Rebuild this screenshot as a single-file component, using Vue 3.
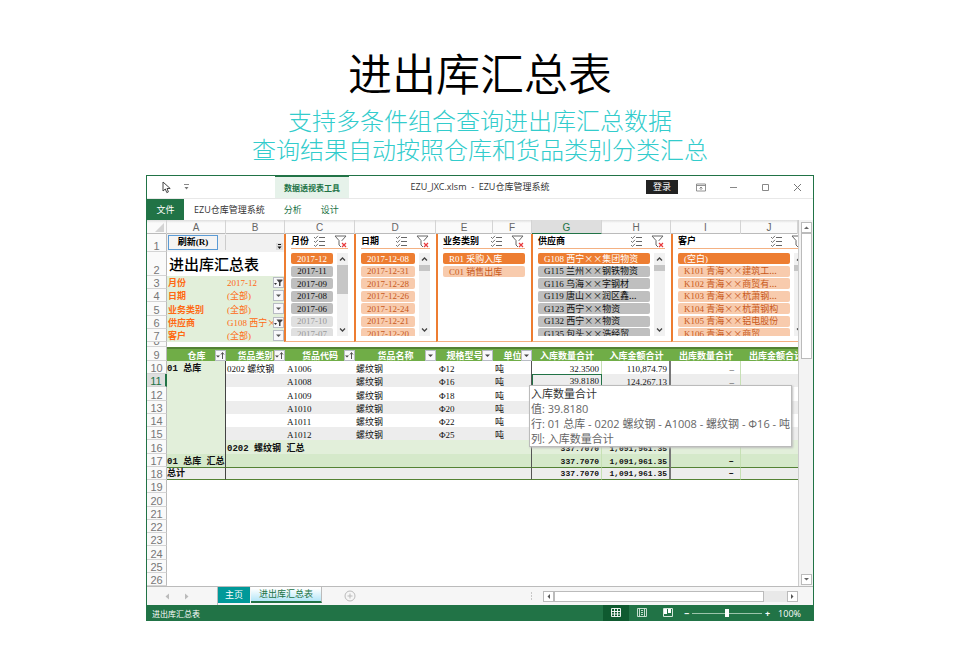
<script setup>
import { ref } from 'vue'

const columns = ['A', 'B', 'C', 'D', 'E', 'F', 'G', 'H', 'I', 'J']

const filters = [
  { id: 'f-month', label: '月份', value: '2017-12', active: true },
  { id: 'f-date', label: '日期', value: '(全部)', active: false },
  { id: 'f-kind', label: '业务类别', value: '(全部)', active: false },
  { id: 'f-supplier', label: '供应商', value: 'G108 西宁×', active: true },
  { id: 'f-client', label: '客户', value: '(全部)', active: false },
]

const slicers = [
  {
    title: '月份', area: 'month', scroll: 'mid', center: true,
    items: [
      ['2017-12', 'on'], ['2017-11', 'grey'], ['2017-09', 'grey'], ['2017-08', 'grey'],
      ['2017-06', 'grey'], ['2017-10', 'faint'], ['2017-07', 'faint'],
    ],
  },
  {
    title: '日期', area: 'date', scroll: 'short', center: false,
    items: [
      ['2017-12-08', 'on'], ['2017-12-31', 'soft'], ['2017-12-28', 'soft'], ['2017-12-26', 'soft'],
      ['2017-12-24', 'soft'], ['2017-12-21', 'soft'], ['2017-12-20', 'soft'],
    ],
  },
  {
    title: '业务类别', area: 'kind', scroll: '', center: false,
    items: [['R01 采购入库', 'on'], ['C01 销售出库', 'soft']],
  },
  {
    title: '供应商', area: 'supplier', scroll: 'short', center: false,
    items: [
      ['G108 西宁××集团物资', 'on'], ['G115 兰州××钢铁物资', 'grey'], ['G116 乌海××字钢材', 'grey'],
      ['G119 唐山××润区鑫...', 'grey'], ['G123 西宁××物资', 'grey'], ['G132 西宁××物资', 'grey'],
      ['G135 包头××浩经贸', 'grey'],
    ],
  },
  {
    title: '客户', area: 'client', scroll: 'short', center: false,
    items: [
      ['(空白)', 'on'], ['K101 青海××建筑工...', 'soft'], ['K102 青海××商贸有...', 'soft'],
      ['K103 青海××杭萧钢...', 'soft'], ['K104 青海××杭萧钢构', 'soft'], ['K105 青海××铝电股份', 'soft'],
      ['K106 青海××商贸', 'soft'],
    ],
  },
]

// Splits a label at its first space: the code, then the name set in the CJK face.
function parts(text) {
  const at = text.indexOf(' ')
  return at < 0 ? [text, ''] : [text.slice(0, at + 1), text.slice(at + 1)]
}

const heads = [
  { text: '仓库', btn: 'sort' }, { text: '货品类别', btn: 'sort' }, { text: '货品代码', btn: 'sort' },
  { text: '货品名称', btn: 'drop' }, { text: '规格型号', btn: 'drop' }, { text: '单位', btn: 'drop' },
  { text: '入库数量合计' }, { text: '入库金额合计' }, { text: '出库数量合计' }, { text: '出库金额合计' },
]

const rows = [
  { n: 10, kind: 'plain', cells: ['01 总库', '0202 螺纹钢', 'A1006', '螺纹钢', 'Φ12', '吨', '32.3500', '110,874.79', '–', ''] },
  { n: 11, kind: 'band', cells: ['', '', 'A1008', '螺纹钢', 'Φ16', '吨', '39.8180', '124,267.13', '–', ''] },
  { n: 12, kind: 'plain', cells: ['', '', 'A1009', '螺纹钢', 'Φ18', '吨', '', '', '', ''] },
  { n: 13, kind: 'band', cells: ['', '', 'A1010', '螺纹钢', 'Φ20', '吨', '', '', '', ''] },
  { n: 14, kind: 'plain', cells: ['', '', 'A1011', '螺纹钢', 'Φ22', '吨', '', '', '', ''] },
  { n: 15, kind: 'band', cells: ['', '', 'A1012', '螺纹钢', 'Φ25', '吨', '', '', '', ''] },
  { n: 16, kind: 'sub', cells: ['', '0202 螺纹钢 汇总', '', '', '', '', '337.7070', '1,091,961.35', '', ''] },
  { n: 17, kind: 'sum', cells: ['01 总库 汇总', '', '', '', '', '', '337.7070', '1,091,961.35', '–', ''] },
  { n: 18, kind: 'total', cells: ['总计', '', '', '', '', '', '337.7070', '1,091,961.35', '–', ''] },
]
const blankRows = [19, 20, 21, 22, 23, 24, 25, 26]

const zoom = ref(50)
</script>

<template>
  <main class="page">
    <h1>进出库汇总表</h1>
    <p class="lead">支持多条件组合查询进出库汇总数据<br>查询结果自动按照仓库和货品类别分类汇总</p>

    <section class="window">
      <header class="titlebar">
        <div class="quick">
          <svg class="pointer" width="10" height="13" viewBox="0 0 10 13"><path d="M1 1v9l2.300-2 1.500 3.600 1.600-.7L5 7.500h3.200z" fill="#fff" stroke="#444" stroke-width="1" /></svg>
          <svg class="more" width="5" height="6" viewBox="0 0 5 6"><path d="M0 .5h5" stroke="#888" /><path d="M.5 3h4L2.500 5.500z" fill="#777" /></svg>
          <span class="context">数据透视表工具</span>
        </div>
        <div class="doc">EZU_JXC.xlsm&nbsp; -&nbsp; EZU仓库管理系统</div>
        <div class="controls">
          <button class="login">登录</button>
          <button class="ctl" aria-label="功能区显示选项"><svg width="12" height="9" viewBox="0 0 12 9" fill="none" stroke="#777"><path d="M1.500 1h9v7h-9zM1.500 2.500h9M6 7V4M4.500 5.500L6 4l1.500 1.500" stroke-width=".8" /></svg></button>
          <button class="ctl" aria-label="最小化"><svg width="9" height="9" viewBox="0 0 9 9"><path d="M1 4.500h7" stroke="#888" /></svg></button>
          <button class="ctl" aria-label="最大化"><svg width="9" height="9" viewBox="0 0 9 9"><path d="M1.500 1.500h6v6h-6z" fill="none" stroke="#888" /></svg></button>
          <button class="ctl" aria-label="关闭"><svg width="9" height="9" viewBox="0 0 9 9"><path d="M1 1l7 7M8 1L1 8" stroke="#777" /></svg></button>
        </div>
      </header>

      <nav class="ribbon">
        <button class="file">文件</button>
        <button class="tab dark">EZU仓库管理系统</button>
        <button class="tab">分析</button>
        <button class="tab">设计</button>
      </nav>

      <div class="sheet">
        <div class="grid-area">
          <div class="colheads">
            <span class="corner"><svg width="9" height="9" viewBox="0 0 9 9"><path d="M9 0v9H0z" fill="#d4d4d4" /></svg></span>
            <span v-for="c in columns" :key="c" class="colhead" :class="{ picked: c === 'G' }">{{ c }}</span>
          </div>

          <div class="upper">
            <div class="rownums">
              <span v-for="n in 8" :key="n" class="rownum">{{ n }}</span>
            </div>
            <div class="left">
              <div class="toolrow">
                <button class="refresh">刷新(R)</button>
                <span class="well"><svg width="7" height="7" viewBox="0 0 7 7"><path d="M0 0h7v7H0z" fill="#ddd" /><path d="M2 1.500h3" stroke="#111" /><path d="M1.500 3.500h4L3.500 6z" fill="#111" /></svg></span>
              </div>
              <div class="caption">进出库汇总表</div>
              <div v-for="f in filters" :key="f.id" class="filter">
                <span class="flabel">{{ f.label }}</span>
                <span class="fvalue">{{ parts(f.value)[0] }}<span class="name">{{ parts(f.value)[1] }}</span></span>
                <button class="fbtn" :aria-label="f.label + '筛选'">
                  <svg v-if="f.active" width="9" height="9" viewBox="0 0 9 9"><path d="M0 5h3L1.500 7z" fill="#333" /><path d="M2.500 1.500h6v1L6.500 4.500V8H5V4.500z" fill="#444" /></svg>
                  <svg v-else width="7" height="7" viewBox="0 0 7 7"><path d="M1 2.500h5L3.500 5z" fill="#555" /></svg>
                </button>
              </div>
            </div>

            <section v-for="s in slicers" :key="s.area" class="slicer" :class="s.area">
              <div class="shead">
                <span class="stitle">{{ s.title }}</span>
                <svg class="multi" width="13" height="13" viewBox="0 0 13 13" fill="none" stroke="#666"><path d="M6 2.500h6M6 6.500h6M6 10.500h6" /><path d="M1 2l1.500 1.500L5 .8M1 6l1.500 1.500L5 4.800M1 10l1.500 1.500L5 8.800" stroke-width=".9" /></svg>
                <svg class="clear" width="14" height="13" viewBox="0 0 14 13" fill="none"><path d="M1 1h11L8 5.500V6M1 1l4 4.500V10l2 2" stroke="#666" /><path d="M8 8l4 4M12 8l-4 4" stroke="#e8393c" stroke-width="1.200" /></svg>
              </div>
              <div class="sbody">
                <div class="clip">
                  <div class="items" :class="{ few: s.items.length < 3 }">
                    <button v-for="it in s.items" :key="it[0]" class="item" :class="[it[1], { mid: s.center }]">{{ parts(it[0])[0] }}<span class="name">{{ parts(it[0])[1] }}</span></button>
                  </div>
                </div>
                <div v-if="s.scroll" class="strip" :class="s.scroll">
                  <svg width="7" height="6" viewBox="0 0 7 6"><path d="M1 4.500L3.500 2 6 4.500" fill="none" stroke="#444" stroke-width="1.300" /></svg>
                  <i class="knob"></i>
                  <svg width="7" height="6" viewBox="0 0 7 6"><path d="M1 1.500L3.500 4 6 1.500" fill="none" stroke="#444" stroke-width="1.300" /></svg>
                </div>
              </div>
            </section>
          </div>

          <div class="lower">
            <table>
              <colgroup>
                <col class="w-n"><col class="w-a"><col class="w-a"><col class="w-c"><col class="w-d"><col class="w-e"><col class="w-f"><col class="w-c"><col class="w-h"><col class="w-c"><col>
              </colgroup>
              <thead>
                <tr>
                  <th class="rh">9</th>
                  <th v-for="(h, i) in heads" :key="h.text" class="th" :class="'c' + i">
                    <div class="thin">
                      <span>{{ h.text }}</span>
                      <button v-if="h.btn" class="hbtn" :aria-label="h.text + '筛选'">
                        <svg v-if="h.btn === 'sort'" width="9" height="9" viewBox="0 0 9 9"><path d="M0 4.500h4L2 6.500z" fill="#444" /><path d="M6.500 8V2M5 3.500L6.500 1.500 8 3.500" fill="none" stroke="#555" /></svg>
                        <svg v-else width="7" height="7" viewBox="0 0 7 7"><path d="M1 2.500h5L3.500 5z" fill="#444" /></svg>
                      </button>
                    </div>
                  </th>
                </tr>
              </thead>
              <tbody>
                <tr v-for="r in rows" :key="r.n" :class="r.kind">
                  <th class="rh" :class="{ picked: r.n === 11 }" scope="row">{{ r.n }}</th>
                  <td v-for="(c, i) in r.cells" :key="i" :class="['c' + i, { cursor: r.n === 11 && i === 6 }]">
                    {{ c }}
                    <div v-if="r.n === 11 && i === 6" class="tip" role="tooltip">
                      <div class="tiphead">入库数量合计</div>
                      <div>值: 39.8180</div>
                      <div>行: 01 总库 - 0202 螺纹钢 - A1008 - 螺纹钢 - Φ16 - 吨</div>
                      <div>列: 入库数量合计</div>
                    </div>
                  </td>
                </tr>
                <tr v-for="n in blankRows" :key="n" class="blank">
                  <th class="rh" scope="row">{{ n }}</th>
                  <td colspan="10"></td>
                </tr>
              </tbody>
            </table>
          </div>
        </div>

        <div class="vbar">
          <button class="arrow" aria-label="向上滚动"><svg width="7" height="7" viewBox="0 0 7 7"><path d="M1 5h5L3.500 2.500z" fill="#666" /></svg></button>
          <i class="vthumb"></i>
          <i class="vtrack"></i>
          <button class="arrow" aria-label="向下滚动"><svg width="7" height="7" viewBox="0 0 7 7"><path d="M1 2h5L3.500 4.500z" fill="#666" /></svg></button>
        </div>
      </div>

      <div class="tabs">
        <div class="navs">
          <svg width="4" height="7" viewBox="0 0 4 7"><path d="M4 .5v6L.5 3.500z" fill="#bbb" /></svg>
          <svg width="4" height="7" viewBox="0 0 4 7"><path d="M0 .5v6l3.500-3z" fill="#bbb" /></svg>
        </div>
        <button class="sheettab home">主页</button>
        <button class="sheettab current">进出库汇总表</button>
        <button class="add" aria-label="新工作表"><svg width="12" height="12" viewBox="0 0 12 12" fill="none" stroke="#bbb"><circle cx="6" cy="6" r="5" /><path d="M3.500 6h5M6 3.500v5" /></svg></button>
        <div class="hbar">
          <svg class="grip" width="3" height="9" viewBox="0 0 3 9"><path d="M1 1h1M1 4h1M1 7h1" stroke="#999" stroke-width="1" /></svg>
          <button class="arrow" aria-label="向左滚动"><svg width="7" height="7" viewBox="0 0 7 7"><path d="M5 1v5L2.500 3.500z" fill="#555" /></svg></button>
          <i class="hthumb"></i>
          <i class="htrack"></i>
          <button class="arrow" aria-label="向右滚动"><svg width="7" height="7" viewBox="0 0 7 7"><path d="M2 1v5l2.500-2.500z" fill="#555" /></svg></button>
        </div>
      </div>

      <footer class="status">
        <span class="state">进出库汇总表</span>
        <button class="view on" aria-label="普通"><svg width="11" height="10" viewBox="0 0 11 10" fill="none" stroke="#fff"><path d="M.5.5h9v8h-9zM.5 3.500h9M.5 6h9M3.500.5v8M6.500.5v8" stroke-width=".9" /></svg></button>
        <button class="view" aria-label="页面布局"><svg width="11" height="10" viewBox="0 0 11 10" fill="none" stroke="#d7e8dd"><path d="M.5.5h9v8h-9zM2.500.5v8M7.500.5v8M4 2.500h2M4 4.500h2M4 6.500h2" stroke-width=".9" /></svg></button>
        <button class="view" aria-label="分页预览"><svg width="11" height="10" viewBox="0 0 11 10"><path d="M.5.5h9v8h-9z" fill="none" stroke="#d7e8dd" /><path d="M1 1h3v5H1zM5 1h3v4H5z" fill="#fff" /></svg></button>
        <span class="sign">−</span>
        <input v-model="zoom" class="zoom" type="range" min="0" max="100" aria-label="缩放">
        <span class="sign">+</span>
        <span class="pct">100%</span>
      </footer>
    </section>
  </main>
</template>

<style>
body {
  background: #fff;
}
</style>

<style scoped>
* {
  box-sizing: border-box;
}

.page {
  --line: #d4d4d4;
  --green: #217346;
  --cols: 59px 59px 70px 81px 57px 39px 70px 69px 70px minmax(0, 1fr);
  padding: 42px 146px 46px;
  font-family: "Open Sans", "Noto Sans CJK SC", sans-serif;
}

button {
  margin: 0;
  padding: 0;
  border: 0;
  background: none;
  color: inherit;
  font: inherit;
}

svg {
  display: block;
  flex: none;
}

h1 {
  margin: 0;
  color: #000;
  font: 350 44px/60px "Noto Sans CJK SC", sans-serif;
  text-align: center;
}

.lead {
  margin: 3px 0 12px;
  color: #33cccc;
  font: 300 24px/29px "Noto Sans CJK SC", sans-serif;
  text-align: center;
}

.window {
  border: 1px solid var(--green);
  border-bottom: 0;
  background: #fff;
}

.titlebar {
  display: grid;
  grid-template-columns: 1fr auto 1fr;
  align-items: center;
  height: 23px;
  border-bottom: 1px solid #e8e8e8;
  font-size: 8px;
}

.quick {
  display: flex;
  align-items: center;
  height: 22px;
  padding-left: 15px;
}

.more {
  margin-left: 12px;
}

.context {
  align-self: stretch;
  margin-left: 86px;
  padding: 0 9px;
  border-top: 1px solid var(--green);
  background: #e6f2ea;
  color: var(--green);
  font-weight: 600;
  line-height: 22px;
  white-space: nowrap;
}

.doc {
  color: #333;
  font-size: 9px;
  line-height: 20px;
  white-space: nowrap;
}

.controls {
  display: flex;
  align-items: center;
  justify-content: flex-end;
}

.login {
  width: 32px;
  height: 14px;
  margin-right: 7px;
  background: #222;
  color: #fff;
  font-size: 9px;
  line-height: 14px;
}

.ctl {
  display: grid;
  place-items: center;
  width: 32px;
  height: 22px;
}

.ribbon {
  display: flex;
  gap: 1px;
  align-items: stretch;
  height: 21px;
  color: var(--green);
  font-size: 9px;
}

.file {
  width: 37px;
  background: var(--green);
  color: #fff;
}

.tab {
  padding: 0 9px;
}

.dark {
  color: #333;
}

.sheet {
  display: flex;
  border-bottom: 1px solid #bbb;
}

.grid-area {
  flex: 1;
  min-width: 0;
  overflow: hidden;
}

.colheads {
  display: grid;
  grid-template-columns: 20px var(--cols);
  height: 14px;
  border-bottom: 1px solid #bbb;
  background: linear-gradient(#dedede, #fafafa 3px);
  color: #666;
  font: 10px/16px "Liberation Sans", sans-serif;
}

.corner {
  display: grid;
  place-items: end;
  padding: 2px;
  border-right: 1px solid var(--line);
}

.colhead {
  height: 14px;
  border-right: 1px solid var(--line);
  text-align: center;
}

.colhead.picked {
  border-bottom: 1px solid var(--green);
  background: #dedede;
  color: var(--green);
}

.upper {
  display: grid;
  grid-template-columns: 20px 117px 70px 82px 95px 140px minmax(0, 1fr);
  height: 113px;
}

.rownums,
.left {
  display: grid;
  grid-template-rows: 18px 24px repeat(5, minmax(0, 1fr)) 5px;
}

.rownum {
  display: flex;
  align-items: flex-end;
  justify-content: center;
  overflow: hidden;
  border-right: 1px solid #bbb;
  border-bottom: 1px solid var(--line);
  background: #fafafa;
  color: #777;
  font: 11px/9px "Liberation Sans", sans-serif;
}

.toolrow {
  display: flex;
  align-items: flex-start;
  padding: 1px 1px 0;
  background: #f1f1f1;
}

.refresh {
  width: 50px;
  height: 15px;
  border: 1px solid #5b9bd5;
  background: #f4f4f4;
  color: #000;
  font: bold 9px/13px "Liberation Serif", "Noto Sans CJK SC", serif;
}

.well {
  display: flex;
  flex: 1;
  align-items: flex-end;
  justify-content: flex-end;
  height: 15px;
  margin-left: 7px;
  border-left: 1px solid #ccc;
}

.caption {
  padding-left: 2px;
  color: #000;
  font: 500 15px/24px "Noto Sans CJK SC", sans-serif;
}

.filter {
  display: grid;
  grid-template-columns: 59px minmax(0, 1fr) 11px;
  align-items: end;
  background: #e2efda;
  color: #ff6a13;
  font: 9px/11px "Liberation Serif", "Noto Sans CJK SC", serif;
}

.flabel {
  padding-left: 1px;
  font-weight: bold;
}

.fvalue {
  padding-left: 1px;
  white-space: nowrap;
}

.name {
  font-family: "Noto Sans CJK SC", sans-serif;
}

.fbtn,
.hbtn {
  display: grid;
  place-items: center;
  width: 11px;
  height: 11px;
  border: 1px solid #b8bcc4;
  background: #f8f8fb;
}

.fbtn {
  align-self: center;
}

.slicer {
  height: 108px;
  overflow: hidden;
  padding: 0 6px 0 5px;
  border-bottom: 1px solid #f4b183;
  border-left: 2px solid #ed7d31;
}

.shead {
  display: flex;
  align-items: center;
  height: 15px;
  border-bottom: 1px solid #f4b183;
  color: #000;
}

.stitle {
  flex: 1;
  font: bold 9px/14px "Noto Sans CJK SC", sans-serif;
  white-space: nowrap;
}

.clear {
  margin-left: 8px;
}

.sbody {
  display: flex;
  gap: 4px;
  height: 83px;
  margin-top: 4px;
}

.clip {
  flex: 1;
  min-width: 0;
  overflow: hidden;
}

.items {
  display: flex;
  flex-direction: column;
  justify-content: space-between;
  height: 86px;
}

.items.few {
  justify-content: flex-start;
  gap: 2px;
}

.item {
  flex: none;
  height: 11px;
  padding: 0 6px;
  border-radius: 2px;
  font: 9px/10px "Liberation Serif", "Noto Sans CJK SC", serif;
  text-align: left;
  white-space: nowrap;
}

.item.mid {
  padding: 0;
  text-align: center;
}

.on {
  background: #ed7d31;
  color: #fff;
}

.soft {
  background: #f8cbad;
  color: #c8591a;
}

.grey {
  background: #bfbfbf;
  color: #111;
}

.faint {
  background: #e0e0e0;
  color: #999;
}

.strip {
  display: grid;
  grid-template-rows: 12px 1fr 12px;
  flex: none;
  justify-items: center;
  align-items: center;
  width: 11px;
  background: #f1f1f1;
}

.knob {
  align-self: start;
  width: 11px;
  height: 6px;
  background: #c6c6c6;
}

.mid .knob {
  height: 29px;
}

.client {
  width: 140px;
}

.lower {
  height: 239px;
}

table {
  width: 100%;
  height: 239px;
  border-spacing: 0;
  table-layout: fixed;
  color: #111;
  font: 9px/10px "Liberation Serif", "Noto Sans CJK SC", serif;
}

.w-n { width: 20px; }
.w-a { width: 59px; }
.w-c { width: 70px; }
.w-d { width: 81px; }
.w-e { width: 57px; }
.w-f { width: 39px; }
.w-h { width: 69px; }

th,
td {
  height: 13px;
  padding: 0;
  vertical-align: bottom;
  white-space: nowrap;
}

.rh {
  border-right: 1px solid #bbb;
  border-bottom: 1px solid var(--line);
  background: #fafafa;
  color: #777;
  font: 11px/10px "Liberation Sans", sans-serif;
}

.rh.picked {
  border-right: 2px solid var(--green);
  background: #dedede;
  color: var(--green);
}

.th {
  overflow: hidden;
  border-top: 2px solid #548235;
  background: #70ad47;
  color: #fff;
  font: bold 9px/11px "Noto Sans CJK SC", sans-serif;
}

.thin {
  display: flex;
  align-items: center;
  height: 12px;
}

.thin span {
  flex: 1;
  min-width: 0;
}

.th.c9 span {
  padding-left: 8px;
  text-align: left;
}

.hbtn {
  flex: none;
  margin-left: -11px;
}

td.c0,
td.c1,
td.c3 {
  padding-left: 1px;
}

td.c2,
td.c5 {
  padding-left: 2px;
}

td.c4 {
  padding-left: 3px;
}

td.c0 {
  padding-left: 0;
  border-right: 1px solid #444;
  background: #e2efda;
  font-family: "Liberation Mono", "Noto Sans CJK SC", monospace;
  font-weight: bold;
}

td.c6,
td.c7,
td.c8 {
  padding-right: 2px;
  text-align: right;
}

td.c8 {
  padding-right: 6px;
}

td.c5 {
  border-right: 1px solid #555;
}

td.c7 {
  border-right: 2px solid #777;
}

td.c6,
td.c8 {
  border-right: 1px solid #c6e0b4;
}

.band td {
  background: #ededed;
}

.sub td {
  background: #e2efda;
}

.sum td {
  background: #d5e9ca;
}

.band td.c0 {
  background: #e2efda;
}

.sub td,
.sum td,
.total td {
  font-family: "Liberation Mono", "Noto Sans CJK SC", monospace;
  font-weight: bold;
}

.sub td.c6,
.sub td.c7,
.sum td.c6,
.sum td.c7,
.total td.c6,
.total td.c7 {
  font-size: 8px;
}

.total td {
  border-top: 1px solid #548235;
  border-bottom: 1px solid #548235;
  background: #ededed;
}

.band td.cursor {
  position: relative;
  border: 1px solid var(--green);
}

.tip {
  position: absolute;
  z-index: 1;
  top: 10px;
  left: -4px;
  padding: 0 1px;
  border: 1px solid #bbb;
  background: #fff;
  box-shadow: 1px 1px 2px #bbb;
  color: #666;
  font: 11px/15px "Open Sans", "Noto Sans CJK SC", sans-serif;
  text-align: left;
}

.tiphead {
  color: #333;
}

.vbar {
  display: flex;
  flex-direction: column;
  flex: none;
  width: 15px;
  padding: 2px 2px 1px;
  border-left: 1px solid #ccc;
  background: #f3f3f3;
}

.arrow {
  display: grid;
  flex: none;
  place-items: center;
  width: 11px;
  height: 11px;
  border: 1px solid #bbb;
  background: #fff;
}

.vthumb {
  flex: none;
  height: 126px;
  width: 11px;
  border: 1px solid #bbb;
  background: #fff;
}

.vtrack {
  flex: 1;
}

.tabs {
  display: flex;
  height: 18px;
  background: #f6f6f6;
  font-size: 9px;
}

.navs {
  display: flex;
  align-items: center;
  gap: 16px;
  width: 71px;
  padding-left: 18px;
  border-right: 1px solid #bbb;
}

.sheettab {
  height: 16px;
  line-height: 14px;
}

.home {
  width: 32px;
  background: #009999;
  color: #fff;
}

.current {
  width: 71px;
  margin-left: 1px;
  border-right: 1px solid #bbb;
  border-bottom: 2px solid var(--green);
  background: linear-gradient(#fff 10%, #b4e6f8);
  color: var(--green);
}

.add {
  display: grid;
  place-items: center;
  width: 12px;
  margin-left: 22px;
}

.hbar {
  display: flex;
  flex: 1;
  align-items: center;
  justify-content: flex-end;
  padding-right: 15px;
}

.grip {
  margin-right: 10px;
}

.hthumb {
  width: 210px;
  height: 11px;
  border: 1px solid #bbb;
  background: #fff;
}

.htrack {
  width: 23px;
  height: 11px;
  background: #e9e9e9;
}

.status {
  display: flex;
  align-items: center;
  height: 16px;
  margin: 0 -1px;
  padding: 0 13px 0 6px;
  background: var(--green);
  color: #fff;
  font-size: 8px;
}

.state {
  flex: 1;
}

.view {
  display: grid;
  place-items: center;
  width: 26px;
  height: 16px;
}

.view.on {
  background: #0f5a30;
}

.sign {
  width: 11px;
  font-size: 9px;
  font-weight: bold;
  text-align: center;
}

.zoom {
  appearance: none;
  width: 70px;
  height: 8px;
  margin: 0;
  background: linear-gradient(#9cc4ab, #9cc4ab) center / 100% 1px no-repeat;
}

.zoom::-webkit-slider-thumb {
  appearance: none;
  width: 4px;
  height: 8px;
  background: #fff;
}

.pct {
  margin-left: 5px;
  font-size: 9px;
}
</style>
